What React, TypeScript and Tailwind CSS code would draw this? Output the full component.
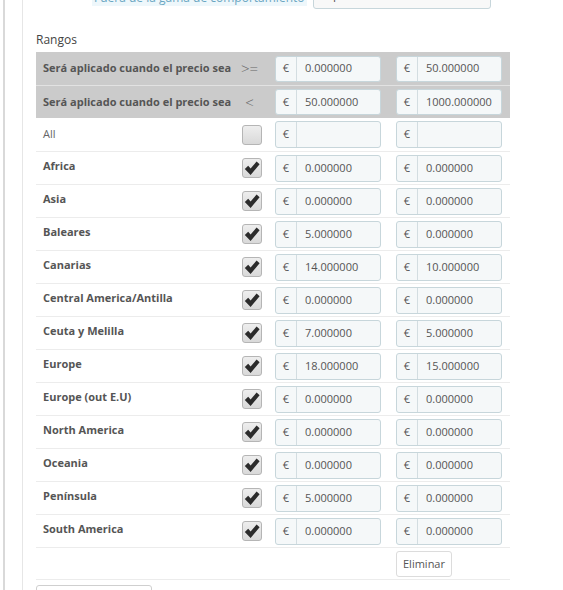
import React from "react";

type Zone = { name: string; from: string; to: string };

const ZONES: Zone[] = [
  { name: "Africa", from: "0.000000", to: "0.000000" },
  { name: "Asia", from: "0.000000", to: "0.000000" },
  { name: "Baleares", from: "5.000000", to: "0.000000" },
  { name: "Canarias", from: "14.000000", to: "10.000000" },
  { name: "Central America/Antilla", from: "0.000000", to: "0.000000" },
  { name: "Ceuta y Melilla", from: "7.000000", to: "5.000000" },
  { name: "Europe", from: "18.000000", to: "15.000000" },
  { name: "Europe (out E.U)", from: "0.000000", to: "0.000000" },
  { name: "North America", from: "0.000000", to: "0.000000" },
  { name: "Oceania", from: "0.000000", to: "0.000000" },
  { name: "Península", from: "5.000000", to: "0.000000" },
  { name: "South America", from: "0.000000", to: "0.000000" },
];

function MoneyInput({ value, h = "h-[27px]" }: { value: string; h?: string }) {
  return (
    <div
      className={`flex w-[106px] ${h} border border-[#c7d6db] bg-[#f5f8f9] rounded-[3px] text-[11px] text-[#555]`}
    >
      <span className="flex w-[21px] shrink-0 items-center justify-center border-r border-[#d3dde1]">
        €
      </span>
      <span className="flex items-center pl-[8px]">{value}</span>
    </div>
  );
}

function Check({ checked }: { checked: boolean }) {
  return (
    <div className="flex h-[20px] w-[20px] items-center justify-center rounded-[3px] border border-[#b5b5b5] bg-gradient-to-b from-[#eeeeee] to-[#d9d9d9]">
      {checked && (
        <svg width="16" height="15" viewBox="0 0 16 15">
          <path
            d="M0.8 8 L4.2 4.8 L6.6 7.4 L12.6 0.6 L15.6 3.2 L6.6 14 Z"
            fill="#2b2b2b"
          />
        </svg>
      )}
    </div>
  );
}

export default function App() {
  return (
    <div className="relative h-[590px] w-[563px] overflow-hidden bg-white font-['Open_Sans',sans-serif] text-[#555]">
      {/* left frame lines */}
      <div className="flex h-full">
        <div className="w-[3px]" />
        <div className="h-full w-[2px] bg-[#d9d9d9]" />
        <div className="w-[17px]" />
        <div className="flex-1 border-l border-[#e6e6e6]">
          {/* cut-off toolbar at the top */}
          <div className="flex h-[10px] flex-col">
            <div className="-mt-[20px] flex items-end">
              <span className="ml-[69px] mb-[3px] bg-[#eef7fb] px-[2px] text-[12px] leading-[16px] text-[#6aa6c2]">
                Fuera de la gama de comportamiento
              </span>
              <div className="ml-[6px] flex h-[29px] w-[178px] items-end rounded-[3px] border border-[#c7d6db] bg-[#f8f8f8] px-[12px] pb-[6px] text-[12px] leading-[14px]">
                Aplicar el coste más alto 8?
              </div>
            </div>
          </div>

          <div className="ml-[13px] mt-[22px] w-[474px]">
            <div className="mb-[4px] text-[12px] leading-[16px] text-[#444]">
              Rangos
            </div>

            {/* header rows */}
            {[
              { op: ">=", from: "0.000000", to: "50.000000" },
              { op: "<", from: "50.000000", to: "1000.000000" },
            ].map((r, i) => (
              <div
                key={i}
                className={`flex h-[33px] items-center bg-[#cbcbcb] ${
                  i === 1 ? "border-t border-[#e2e2e2]" : ""
                }`}
              >
                <div className="w-[197px] pl-[7px] text-[11px] font-bold text-[#555]">
                  Será aplicado cuando el precio sea
                </div>
                <div className="w-[35px] pr-[2px] text-center text-[15px] font-light leading-none text-[#666]">
                  {r.op}
                </div>
                <div className="w-[121px] pl-[7px]">
                  <MoneyInput value={r.from} h="h-[26px]" />
                </div>
                <div className="w-[121px] pl-[7px]">
                  <MoneyInput value={r.to} h="h-[26px]" />
                </div>
              </div>
            ))}

            {/* All row */}
            <div className="flex h-[33px] items-center">
              <div className="w-[197px] pl-[7px] text-[11px] text-[#666]">
                All
              </div>
              <div className="flex w-[35px] justify-center pl-[2px]">
                <Check checked={false} />
              </div>
              <div className="w-[121px] pl-[7px]">
                <MoneyInput value="" />
              </div>
              <div className="w-[121px] pl-[7px]">
                <MoneyInput value="" />
              </div>
            </div>

            {ZONES.map((z) => (
              <div
                key={z.name}
                className="flex h-[33px] items-center border-t border-[#ececec]"
              >
                <div className="w-[197px] pl-[7px] pb-[4px] text-[11px] font-bold text-[#555]">
                  {z.name}
                </div>
                <div className="flex w-[35px] justify-center pl-[2px]">
                  <Check checked />
                </div>
                <div className="w-[121px] pl-[7px]">
                  <MoneyInput value={z.from} />
                </div>
                <div className="w-[121px] pl-[7px]">
                  <MoneyInput value={z.to} />
                </div>
              </div>
            ))}

            <div className="flex h-[33px] items-center border-y border-[#ececec]">
              <div className="w-[353px]" />
              <div className="pl-[7px]">
                <button className="h-[26px] w-[56px] rounded-[3px] border border-[#dcdcdc] bg-white text-[11px] text-[#555]">
                  Eliminar
                </button>
              </div>
            </div>

            <div className="mt-[5px] h-[30px] w-[116px] rounded-[3px] border border-[#cfcfcf] bg-white" />
          </div>
        </div>
      </div>
    </div>
  );
}
